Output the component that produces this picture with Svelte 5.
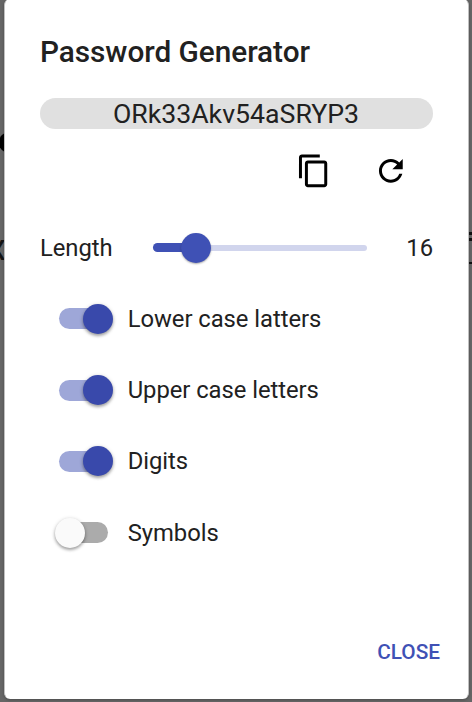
<script>
  let length = $state(16);
  let options = $state([
    { label: 'Lower case latters', on: true },
    { label: 'Upper case letters', on: true },
    { label: 'Digits', on: true },
    { label: 'Symbols', on: false }
  ]);
  const password = 'ORk33Akv54aSRYP3';
</script>

<div class="backdrop">
  <span class="behind dot"></span>
  <span class="behind letter">x</span>
  <span class="behind bar one"></span>
  <span class="behind bar two"></span>
  <span class="behind bar three"></span>
  <section class="dialog" role="dialog" aria-labelledby="title">
    <h2 id="title">Password Generator</h2>
    <div class="password">{password}</div>
    <div class="actions">
      <button aria-label="Copy">
        <svg viewBox="0 0 24 24"><path d="M16 1H4c-1.1 0-2 .9-2 2v14h2V3h12V1zm3 4H8c-1.1 0-2 .9-2 2v14c0 1.1.9 2 2 2h11c1.1 0 2-.9 2-2V7c0-1.1-.9-2-2-2zm0 16H8V7h11v14z" /></svg>
      </button>
      <button aria-label="Refresh">
        <svg viewBox="0 0 24 24"><path d="M17.65 6.35C16.2 4.9 14.21 4 12 4c-4.42 0-7.99 3.58-7.99 8s3.57 8 7.99 8c3.73 0 6.84-2.55 7.73-6h-2.08c-.82 2.33-3.04 4-5.65 4-3.31 0-6-2.69-6-6s2.69-6 6-6c1.66 0 3.14.69 4.22 1.78L13 11h7V4l-2.35 2.35z" /></svg>
      </button>
    </div>
    <div class="length">
      <span class="name">Length</span>
      <div class="slider">
        <span class="track"></span>
        <span class="thumb"></span>
      </div>
      <span class="value">{length}</span>
    </div>
    <div class="options">
      {#each options as option}
        <button class="option" role="switch" aria-checked={option.on} onclick={() => (option.on = !option.on)}>
          <span class="switch" class:on={option.on}><span class="knob"></span></span>
          <span>{option.label}</span>
        </button>
      {/each}
    </div>
    <footer><button class="close">CLOSE</button></footer>
  </section>
</div>

<style>
  :global(body) {
    margin: 0;
    overflow: hidden;
  }
  .backdrop {
    position: relative;
    box-sizing: border-box;
    width: 472px;
    height: 702px;
    padding-left: 4px;
    overflow: hidden;
    background: #666;
    font-family: Roboto, sans-serif;
    font-size: 23.8px;
    letter-spacing: -0.04px;
    color: #212121;
  }
  .behind {
    position: absolute;
  }
  .dot {
    left: -1px;
    top: 132px;
    width: 20px;
    height: 21px;
    border-radius: 50%;
    background: #000;
  }
  .letter {
    left: -12px;
    top: 227px;
    font-size: 36px;
    color: #151515;
  }
  .bar {
    left: 467px;
    width: 6px;
    height: 3px;
    background: #111;
  }
  .one { top: 232px; }
  .two { top: 238px; }
  .three { top: 262px; height: 2px; }
  .dialog {
    position: relative;
    box-sizing: border-box;
    width: 465px;
    height: 700px;
    margin-top: -1px;
    padding: 0 35px;
    border: solid #c0c0c0;
    border-width: 0 1px;
    border-radius: 6px;
    background: #fff;
    box-shadow: 0 1px 3px #0004;
    display: flex;
    flex-direction: column;
  }
  h2 {
    margin: 0;
    padding-top: 29px;
    height: 69.5px;
    font-size: 29.75px;
    line-height: 48px;
    font-weight: 500;
    letter-spacing: -0.03px;
  }
  .password {
    height: 31px;
    line-height: 32px;
    border-radius: 16px;
    background: #e0e0e0;
    text-align: center;
    text-indent: -1px;
    font-size: 26.7px;
    letter-spacing: 0;
  }
  button {
    display: flex;
    margin: 0;
    padding: 0;
    border: 0;
    background: none;
    font: inherit;
    letter-spacing: inherit;
    color: inherit;
  }
  .actions {
    height: 83.5px;
    padding: 24px 24px 0 0;
    box-sizing: border-box;
    display: flex;
    justify-content: flex-end;
    gap: 41.6px;
  }
  svg {
    width: 35.7px;
    height: 35.7px;
    fill: #000;
  }
  .length {
    height: 71.4px;
    display: flex;
    align-items: center;
  }
  .name {
    width: 113px;
  }
  .slider {
    position: relative;
    width: 213.5px;
    height: 6px;
    border-radius: 3px;
    background: #d1d5ed;
  }
  .track {
    position: absolute;
    left: 0;
    top: -1.5px;
    width: 43px;
    height: 9px;
    border-radius: 4.5px;
    background: #3f51b5;
  }
  .thumb {
    position: absolute;
    left: 27.5px;
    top: -12px;
    width: 30px;
    height: 30px;
    border-radius: 50%;
    background: #3f51b5;
    box-shadow: 0 1px 2px #0005;
  }
  .value {
    flex: 1;
    text-align: right;
  }
  .options {
    height: 285.2px;
    margin-top: -0.2px;
  }
  .option {
    height: 71.3px;
    align-items: center;
    padding-left: 19px;
    gap: 19.7px;
  }
  .switch {
    position: relative;
    width: 49px;
    height: 21px;
    border-radius: 11px;
    background: #ababab;
  }
  .knob {
    position: absolute;
    left: -4.5px;
    top: -4.5px;
    width: 30px;
    height: 30px;
    border-radius: 50%;
    background: #fafafa;
    box-shadow: 0 2px 3px #0004, 0 1px 4px #0003;
  }
  .switch.on {
    background: #9ea7d8;
  }
  .on .knob {
    left: 24px;
    background: #3949ab;
  }
  footer {
    flex: 1;
    display: flex;
    justify-content: flex-end;
    align-items: flex-start;
    padding-top: 66px;
    margin-right: -7px;
  }
  .close {
    color: #3f51b5;
    font-size: 20.8px;
    font-weight: 500;
    line-height: 36px;
    letter-spacing: 0;
  }
</style>
